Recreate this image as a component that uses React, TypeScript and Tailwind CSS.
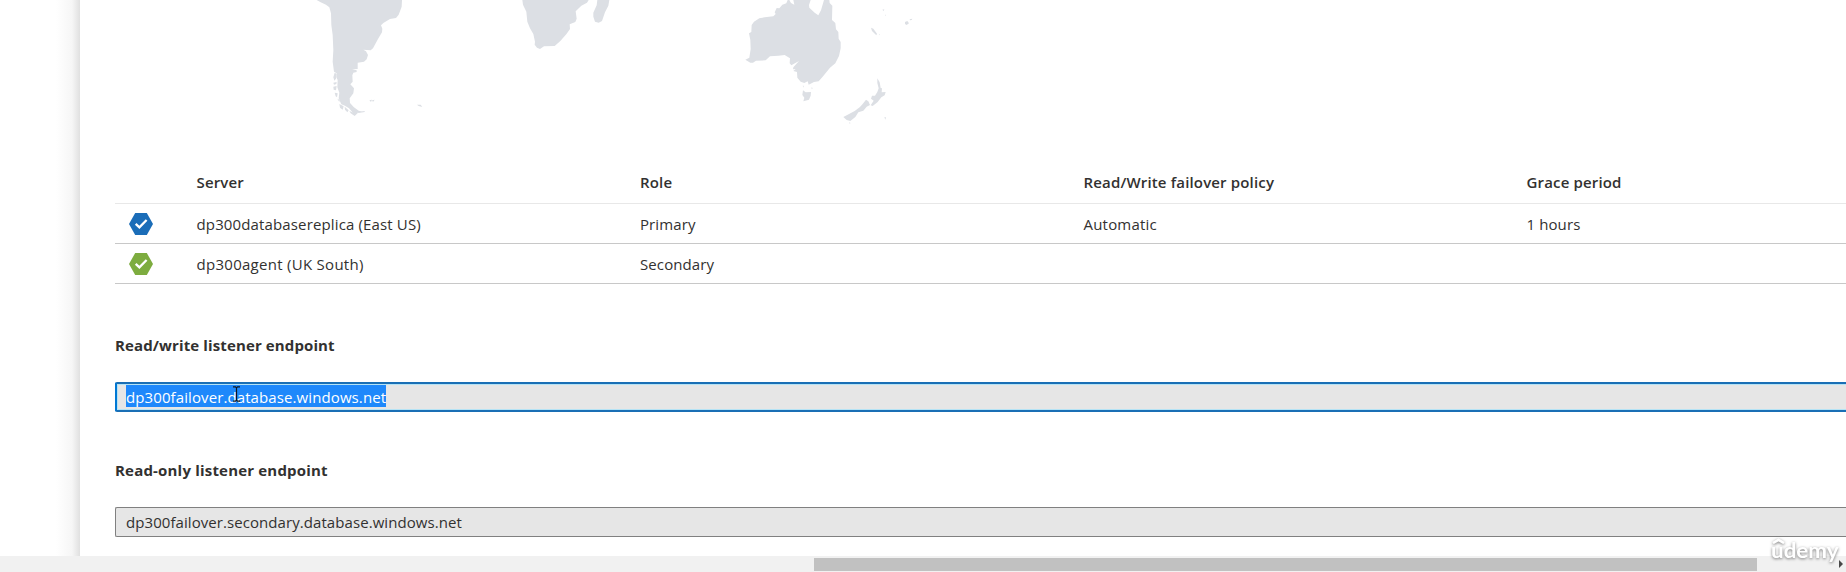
import React from "react";

const columns = "grid grid-cols-[81.5px_443.5px_443.5px_443px_1fr] items-center";

function StatusIcon({ color }: { color: string }) {
  return (
    <svg className="ml-[14px] h-[22px] w-6" viewBox="0 0 24 22">
      <path d="M6.2 0H17.8L24 11L17.8 22H6.2L0 11Z" fill={color} />
      <path d="M6.7 10.9L10.4 14.4L17.6 7" fill="none" stroke="#fff" strokeWidth="2.3" />
    </svg>
  );
}

function WorldMap() {
  return (
    <svg className="block h-[160px] w-full" viewBox="0 0 1766 160" preserveAspectRatio="none" fill="#dcdfe4">
      <g transform="translate(220 0) scale(.33333)">
        <path d="M50 0L62 7L78 14L88 22L93 40L94 75L98 105L100 150L98 185L102 215L110 220L109 232L113 240L112 262L118 278L116 295L124 313L135 317L147 325L156 335L166 345L174 337L187 335L176 332L161 321L150 309L149 295L160 280L162 265L151 253L158 245L157 226L160 218L170 216L170 211L156 208L173 207L173 188L192 185L200 178L204 165L198 154L190 149L212 151L219 145L234 117L246 97L247 86L243 76L250 69L270 57L288 54L296 44L305 20L306 0Z" />
        <path d="M104 218L110 222L108 236L103 242L100 232ZM100 248L110 246L109 252L102 254ZM100 260L110 258L108 271L101 269ZM104 278L113 280L111 292L107 289ZM112 296L119 300L118 306ZM118 312L131 319L128 329L120 323ZM134 320L146 331L142 337L135 329ZM148 333L166 340L174 338L164 348L152 340ZM170 336L194 333L194 336L176 339ZM208 301L216 299L213 306ZM216 301L224 299L219 306ZM351 314L362 314L367 321L356 318Z" />
      </g>
      <g transform="translate(430 0) scale(.33333)">
        <path d="M37 0L39 14L49 35L52 65L60 85L70 102L75 125L74 134L81 143L90 147L102 139L134 138L151 123L170 101L180 87L179 73L196 66L200 56L197 34L214 17L231 8L236 0Z" />
        <path d="M262 0L260 16L250 38L250 50L255 65L266 68L276 63L285 37L295 17L298 0Z" />
      </g>
      <g transform="translate(650 0) scale(.33333)">
        <path d="M173 0L169 10L157 14L148 25L140 24L134 37L137 42L130 49L104 52L88 55L72 65L65 75L64 96L57 100L61 120L62 147L58 173L46 179L61 188L69 188L78 182L107 181L120 169L145 167L164 165L180 175L179 190L184 196L207 183L190 202L189 208L197 207L190 213L201 216L202 233L212 245L223 249L233 244L236 254L252 246L266 244L278 230L300 203L316 190L327 168L332 145L332 126L326 116L325 96L318 88L316 69L306 60L307 17L299 9L298 0H282L273 31L265 46L254 38L238 23L237 15L242 0H190L193 14L183 9L178 0Z" />
        <path d="M218 257L221 257L221 263ZM245 261L248 265L245 268ZM219 271L227 277L243 276L242 287L237 299L220 304L223 293L217 285ZM442 235L449 247L452 264L456 265L455 277L467 276L464 286L454 292L443 306L428 318L422 316L431 302L423 296L426 287L435 287L442 276L446 265L442 249ZM408 299L415 304L420 315L410 320L400 332L385 337L376 351L361 363L350 360L340 351L353 344L374 333L389 322L398 312ZM357 367L362 369L359 371ZM423 83L430 86L441 101L439 106L426 93ZM525 66L532 63L537 70L530 75L525 72ZM539 58L547 56L545 60L540 61ZM457 29L463 28L461 33ZM465 42L467 47L465 48ZM447 102L450 104L448 106ZM463 352L468 352L466 359Z" />
      </g>
    </svg>
  );
}

function MouseCaret() {
  return (
    <svg className="absolute left-[106px] top-px h-[16px] w-[9px]" viewBox="0 0 9 16" fill="none" stroke="#101820" strokeWidth="1.2">
      <path d="M1 .8H3.5L4.5 1.8L5.5 .8H8M4.5 1.8V14.2M1 15.2H3.5L4.5 14.2L5.5 15.2H8" />
    </svg>
  );
}

export default function App() {
  return (
    <div className="relative flex h-[572px] w-full flex-col overflow-hidden bg-white font-['Open_Sans','Noto_Sans',sans-serif] text-[15px] leading-[22px] tracking-[0.1px] text-[#323130]">
      <div className="flex h-[556px]">
        <div className="w-20 shrink-0 bg-linear-to-r from-white from-70% via-[#f6f6f6] via-90% to-[#e0e0e0]" />
        <main className="min-w-0 flex-1 overflow-hidden">
          <div className="h-[160px]"><WorldMap /></div>
          <section className="ml-[35px] whitespace-nowrap">
            <div className={`${columns} h-11 border-b border-[#e8e8e8] pt-px font-semibold tracking-[0.16px]`}>
              <span />
              <span>Server</span>
              <span>Role</span>
              <span>Read/Write failover policy</span>
              <span>Grace period</span>
            </div>
            <div className={`${columns} h-10 border-b border-[#c8c8c8]`}>
              <StatusIcon color="#1b6db8" />
              <span className="pt-px tracking-[0.14px]">dp300databasereplica (East US)</span>
              <span className="pt-px">Primary</span>
              <span className="pt-px tracking-[0.2px]">Automatic</span>
              <span className="pt-px">1 hours</span>
            </div>
            <div className={`${columns} h-10 border-b border-[#c8c8c8]`}>
              <StatusIcon color="#7dac3f" />
              <span className="pt-px tracking-[0.28px]">dp300agent (UK South)</span>
              <span className="pt-px">Secondary</span>
            </div>
            <h2 className="mt-[50px] font-bold tracking-[0.12px]">Read/write listener endpoint</h2>
            <div className="-mr-2 mt-[26px] h-[30px] rounded-l-[2px] border-2 border-r-0 border-[#1a6fb5] border-l-[#0078d4] bg-[#e6e6e6] pl-[9px] pt-px shadow-[inset_0_0_0_1px_#b5e3f5]">
              <span className="relative inline-block h-[22px] w-[260px] bg-[#1e88fb] leading-[24px] text-white">
                dp300failover.database.windows.net
                <MouseCaret />
              </span>
            </div>
            <h2 className="mt-[47px] font-bold tracking-[0.19px]">Read-only listener endpoint</h2>
            <div className="mt-[26px] h-[30px] rounded-l-[2px] border border-r-0 border-[#808080] bg-[#e6e6e6] pl-[10px] pt-[3px]">
              <span className="tracking-[0.07px]">dp300failover.secondary.database.windows.net</span>
            </div>
          </section>
        </main>
      </div>
      <div className="flex h-4 items-center bg-[#f1f1f1] pl-[814px]">
        <div className="h-[13px] w-[943px] bg-[#c1c1c1]" />
        <svg className="ml-[82px] h-2 w-1" viewBox="0 0 4 8"><path d="M0 0L4 4L0 8Z" fill="#484848" /></svg>
      </div>
      <div className="absolute left-[1771px] top-[534px] h-[34px] w-[70px] drop-shadow-[0_1px_1.5px_#777]">
        <span className="inline-block origin-left scale-x-112 font-['Lato',sans-serif] text-[20px] leading-[32px] font-bold tracking-normal text-white">udemy</span>
        <svg className="absolute left-px top-1 h-[6px] w-[13px]" viewBox="0 0 13 6" fill="none" stroke="#fff" strokeWidth="2.6">
          <path d="M1 5L6.5 1.8L12 5" />
        </svg>
      </div>
    </div>
  );
}
